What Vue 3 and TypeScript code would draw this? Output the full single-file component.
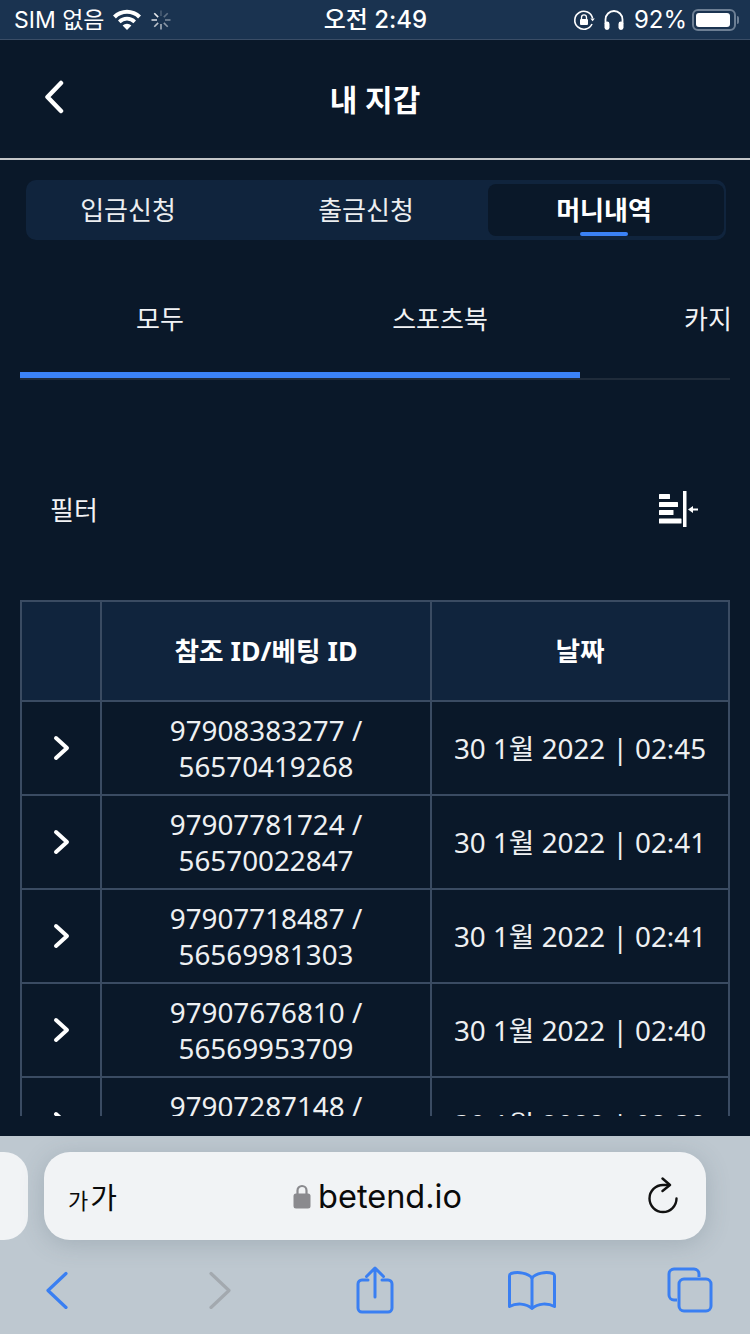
<script setup lang="ts">
import { ref } from 'vue'

const mainTabs = ref(['입금신청', '출금신청', '머니내역'])
const activeTab = ref('머니내역')
const subTabs = ref(['모두', '스포츠북', '카지노'])

const rows = ref([
  { ref: '97908383277', bet: '56570419268', date: '30 1월 2022 | 02:45' },
  { ref: '97907781724', bet: '56570022847', date: '30 1월 2022 | 02:41' },
  { ref: '97907718487', bet: '56569981303', date: '30 1월 2022 | 02:41' },
  { ref: '97907676810', bet: '56569953709', date: '30 1월 2022 | 02:40' },
  { ref: '97907287148', bet: '56569702214', date: '30 1월 2022 | 02:39' }
])

const spokes = Array.from({ length: 8 }, (_, i) => i * 45)
</script>

<template>
  <div class="screen">
    <div class="status-bar">
      <div class="status-left">
        <span>SIM 없음</span>
        <svg class="wifi" width="30" height="22" viewBox="0 0 30 22">
          <path d="M15 21 10.6 16.4a6.4 6.4 0 0 1 8.8 0Z" fill="#fff" />
          <path d="M8.6 14.2 6 11.5a12.8 12.8 0 0 1 18 0l-2.6 2.7a9.2 9.2 0 0 0-12.8 0Z" fill="#fff" />
          <path d="M3.9 9.4 1 6.5a19.8 19.8 0 0 1 28 0l-2.9 2.9a15.8 15.8 0 0 0-22.2 0Z" fill="#fff" />
        </svg>
        <svg class="spinner" width="20" height="20" viewBox="0 0 20 20">
          <line
            v-for="(deg, i) in spokes"
            :key="deg"
            x1="10" y1="0.5" x2="10" y2="6"
            stroke="#fff"
            stroke-width="1.6"
            :opacity="0.2 + i * 0.1"
            :transform="`rotate(${deg} 10 10)`"
          />
        </svg>
      </div>
      <span class="status-time">오전 2:49</span>
      <div class="status-right">
        <svg width="22" height="22" viewBox="0 0 22 22" fill="none">
          <path d="M19.6 9.4A9 9 0 1 0 19 15" stroke="#fff" stroke-width="1.6" />
          <path d="M17.4 9.4h4.4l-2.2 2.8Z" fill="#fff" />
          <rect x="7" y="10" width="8" height="6" rx="1" fill="#fff" />
          <path d="M8.5 10V8.4a2.5 2.5 0 0 1 5 0V10" stroke="#fff" stroke-width="1.3" />
        </svg>
        <svg class="phones" width="22" height="22" viewBox="0 0 22 22" fill="none">
          <path d="M2.5 15V10.5a8.5 8.5 0 0 1 17 0V15" stroke="#fff" stroke-width="1.8" />
          <rect x="1.500" y="12.500" width="5" height="8.500" rx="2.400" fill="#fff" />
          <rect x="15.500" y="12.500" width="5" height="8.500" rx="2.400" fill="#fff" />
        </svg>
        <span class="percent">92%</span>
        <div class="battery">
          <div class="battery-fill"></div>
        </div>
        <div class="battery-cap"></div>
      </div>
    </div>

    <div class="content">
      <header class="nav">
        <svg class="back" width="22" height="34" viewBox="0 0 22 34" fill="none">
          <path d="M18 3 4.500 17 18 31" stroke="#fff" stroke-width="4.500" stroke-linecap="round" stroke-linejoin="round" />
        </svg>
        <h1>내 지갑</h1>
      </header>

      <div class="main-tabs">
        <div
          v-for="tab in mainTabs"
          :key="tab"
          class="main-tab"
          :class="{ active: tab === activeTab }"
        >
          {{ tab }}
        </div>
      </div>

      <div class="sub-tabs">
        <div class="sub-track">
          <div v-for="tab in subTabs" :key="tab" class="sub-tab">{{ tab }}</div>
        </div>
        <div class="sub-indicator"></div>
      </div>

      <div class="filter">
        <span>필터</span>
        <svg width="44" height="38" viewBox="0 0 44 38">
          <rect x="1" y="4" width="11" height="5" rx="0.500" fill="#fff" />
          <rect x="1" y="12" width="19" height="5" rx="0.500" fill="#fff" />
          <rect x="1" y="20" width="14.500" height="5" rx="0.500" fill="#fff" />
          <rect x="1" y="28.500" width="22.500" height="5" rx="0.500" fill="#fff" />
          <rect x="25" y="1" width="3.500" height="36" fill="#fff" />
          <path d="M30 19.500 35 16v2.500h5v2h-5V23Z" fill="#fff" />
        </svg>
      </div>

      <div class="table-wrap">
        <table>
          <thead>
            <tr>
              <th class="col-arrow"></th>
              <th class="col-id">참조 ID/베팅 ID</th>
              <th>날짜</th>
            </tr>
          </thead>
          <tbody>
            <tr v-for="row in rows" :key="row.ref">
              <td>
                <svg class="chevron" width="18" height="26" viewBox="0 0 18 26" fill="none">
                  <path d="M3 3 14 13 3 23" stroke="#fff" stroke-width="4" stroke-linecap="round" stroke-linejoin="round" />
                </svg>
              </td>
              <td>{{ row.ref }} /<br />{{ row.bet }}</td>
              <td>{{ row.date }}</td>
            </tr>
          </tbody>
        </table>
      </div>
    </div>

    <div class="safari">
      <div class="url-row">
        <div class="prev-page"></div>
        <div class="url-bar">
          <span class="aa"><small>가</small>가</span>
          <div class="url">
            <svg width="18" height="26" viewBox="0 0 18 26" fill="none">
              <path d="M4.500 12V7.500a4.500 4.500 0 0 1 9 0V12" stroke="#8a8a8e" stroke-width="2.200" />
              <rect x="0.500" y="10.500" width="17" height="15" rx="2.500" fill="#8a8a8e" />
            </svg>
            <span>betend.io</span>
          </div>
          <svg width="32" height="38" viewBox="0 0 32 38" fill="none">
            <path d="M29.500 21.500A13.500 13.500 0 1 1 16 8h5" stroke="#111" stroke-width="2.400" stroke-linecap="round" />
            <path d="M15.500 1.500 23 8l-7.500 6" stroke="#111" stroke-width="2.400" stroke-linecap="round" stroke-linejoin="round" />
          </svg>
        </div>
      </div>
      <div class="toolbar">
        <svg class="tool-back" width="24" height="38" viewBox="0 0 24 38" fill="none">
          <path d="M21 2.500 3 19.500 21 36.500" stroke="#3a7ff2" stroke-width="3.200" stroke-linecap="round" stroke-linejoin="round" />
        </svg>
        <svg class="tool-forward" width="24" height="38" viewBox="0 0 24 38" fill="none">
          <path d="M3 2.500 21 19.500 3 36.500" stroke="#a3a9af" stroke-width="3.200" stroke-linecap="round" stroke-linejoin="round" />
        </svg>
        <svg class="tool-share" width="38" height="48" viewBox="0 0 38 48" fill="none">
          <path d="M12 14H6a4 4 0 0 0-4 4v24a4 4 0 0 0 4 4h26a4 4 0 0 0 4-4V18a4 4 0 0 0-4-4h-6" stroke="#3a7ff2" stroke-width="3" stroke-linecap="round" />
          <path d="M19 31V3M10.500 10.500 19 2l8.500 8.500" stroke="#3a7ff2" stroke-width="3" stroke-linecap="round" stroke-linejoin="round" />
        </svg>
        <svg class="tool-book" width="48" height="40" viewBox="0 0 48 40" fill="none">
          <path d="M24 8C20 3 10 1.500 3 3.500 2 4 1.500 5 1.500 6v30.500C8 33 18 33 24 38.500 30 33 40 33 46.500 36.500V6c0-1-.5-2-1.500-2.500C38 1.500 28 3 24 8Z" stroke="#3a7ff2" stroke-width="3" stroke-linejoin="round" />
          <path d="M24 8v30" stroke="#3a7ff2" stroke-width="3" />
        </svg>
        <svg class="tool-tabs" width="46" height="46" viewBox="0 0 46 46" fill="none">
          <path d="M10 33H7a5 5 0 0 1-5-5V7a5 5 0 0 1 5-5h20a5 5 0 0 1 5 5v3" stroke="#3a7ff2" stroke-width="3" />
          <rect x="12" y="12" width="32" height="32" rx="5" stroke="#3a7ff2" stroke-width="3" />
        </svg>
      </div>
    </div>
  </div>
</template>

<style scoped>
.screen {
  width: 750px;
  height: 1334px;
  display: flex;
  flex-direction: column;
  overflow: hidden;
  background: #0a1829;
  color: #fff;
  font-family: "Noto Sans", "Noto Sans CJK KR", sans-serif;
}
.status-bar {
  height: 40px;
  box-sizing: border-box;
  flex: none;
  display: grid;
  grid-template-columns: 1fr auto 1fr;
  align-items: center;
  padding: 0 11px 0 14px;
  background: #1a3350;
  border-bottom: 1px solid #3a4d66;
  font-family: Inter, "Noto Sans CJK KR", sans-serif;
  font-size: 24px;
  line-height: 40px;
}
.status-left {
  display: flex;
  align-items: center;
  font-size: 23px;
}
.wifi {
  margin-left: 7px;
}
.spinner {
  margin-left: 9px;
}
.status-time {
  font-weight: 500;
  transform: translateX(-1px);
}
.status-right {
  display: flex;
  align-items: center;
  justify-content: flex-end;
}
.phones {
  margin-left: 8px;
}
.percent {
  margin-left: 9px;
  font-size: 24px;
}
.battery {
  width: 44px;
  height: 22px;
  box-sizing: border-box;
  margin-left: 5px;
  padding: 2px;
  border: 2px solid #6d7f94;
  border-radius: 6px;
}
.battery-fill {
  width: 34px;
  height: 14px;
  background: #fff;
  border-radius: 3px;
}
.battery-cap {
  width: 2px;
  height: 8px;
  margin-left: 1px;
  background: #6d7f94;
  border-radius: 0 2px 2px 0;
}
.content {
  flex: none;
  height: 1076px;
  margin-bottom: 20px;
  overflow: hidden;
}
.nav {
  height: 118px;
  display: flex;
  align-items: center;
  justify-content: center;
  position: relative;
  border-bottom: 2px solid #c4c6c8;
}
.back {
  position: absolute;
  left: 43px;
  top: 40px;
}
.nav h1 {
  margin: 0 0 2px;
  font-size: 30px;
  font-weight: 600;
}
.main-tabs {
  width: 700px;
  height: 60px;
  box-sizing: border-box;
  margin: 20px 0 0 26px;
  padding: 4px 2px 4px 0;
  display: flex;
  background: #10243d;
  border-radius: 10px;
  font-size: 26px;
}
.main-tab {
  width: 238px;
  margin-right: 3px;
  padding-bottom: 3px;
  box-sizing: border-box;
  display: flex;
  align-items: center;
  justify-content: center;
  color: #eceef0;
}
.main-tab:first-child {
  width: 204px;
  margin-right: 17px;
}
.main-tab.active {
  position: relative;
  width: 236px;
  margin-right: 0;
  padding-right: 4px;
  background: #0a1829;
  border-radius: 8px;
  font-weight: 700;
  color: #fff;
}
.main-tab.active::after {
  content: "";
  position: absolute;
  left: 92px;
  bottom: 0;
  width: 48px;
  height: 4px;
  background: #3b82f6;
  border-radius: 2px;
}
.sub-tabs {
  width: 710px;
  margin: 20px 0 0 20px;
  position: relative;
  overflow: hidden;
  border-bottom: 2px solid #1f2b3a;
}
.sub-track {
  display: flex;
  height: 118px;
}
.sub-tab {
  flex: none;
  width: 280px;
  height: 118px;
  line-height: 118px;
  text-align: center;
  font-size: 26px;
  color: #f2f3f5;
}
.sub-indicator {
  position: absolute;
  left: 0;
  bottom: 0;
  width: 560px;
  height: 6px;
  background: #3b82f6;
}
.filter {
  margin-top: 109px;
  height: 40px;
  padding: 0 48px 0 50px;
  display: flex;
  align-items: center;
  justify-content: space-between;
  font-size: 26px;
  color: #f2f3f5;
}
.table-wrap {
  margin: 71px 20px 0;
}
table {
  width: 710px;
  table-layout: fixed;
  border-collapse: collapse;
  font-size: 27.800px;
  line-height: 36px;
  text-align: center;
  color: #eef0f2;
}
th,
td {
  padding: 0;
  border: 2px solid #3a4b62;
}
th {
  height: 98px;
  background: #10243d;
  color: #fff;
  font-size: 26.700px;
  font-weight: 700;
}
td {
  height: 92px;
}
.col-arrow {
  width: 78px;
}
.col-id {
  width: 328px;
}
.chevron {
  display: block;
  margin: 0 auto;
  transform: translateX(1px);
}
.safari {
  flex: 1;
  display: flex;
  flex-direction: column;
  background: #bec8d0;
}
.url-row {
  display: flex;
  gap: 16px;
  margin-top: 16px;
  height: 88px;
}
.prev-page {
  width: 28px;
  background: #f1f3f5;
  border-radius: 0 24px 24px 0;
}
.url-bar {
  width: 662px;
  box-sizing: border-box;
  padding: 0 27px 0 24px;
  display: flex;
  align-items: center;
  justify-content: space-between;
  background: #f1f3f5;
  border-radius: 26px;
  box-shadow: 0 4px 24px rgba(70, 85, 100, 0.22);
  color: #0a0a0a;
}
.aa {
  width: 50px;
  font-size: 29px;
  font-family: "Noto Sans CJK KR", sans-serif;
  line-height: 1;
  white-space: nowrap;
}
.aa small {
  margin-right: 2px;
  font-size: 22px;
}
.url {
  display: flex;
  align-items: center;
  gap: 7px;
  margin-right: 10px;
  font-family: Inter, sans-serif;
  font-size: 32.500px;
}
.toolbar {
  flex: 1;
  padding: 6px 0 0 45px;
  display: flex;
  align-items: center;
}
.tool-forward {
  margin-left: 139px;
}
.tool-share {
  margin-left: 124px;
}
.tool-book {
  margin-left: 114px;
}
.tool-tabs {
  margin-left: 111px;
}
</style>

<style>
html,
body {
  margin: 0;
  background: #0a1829;
}
</style>
